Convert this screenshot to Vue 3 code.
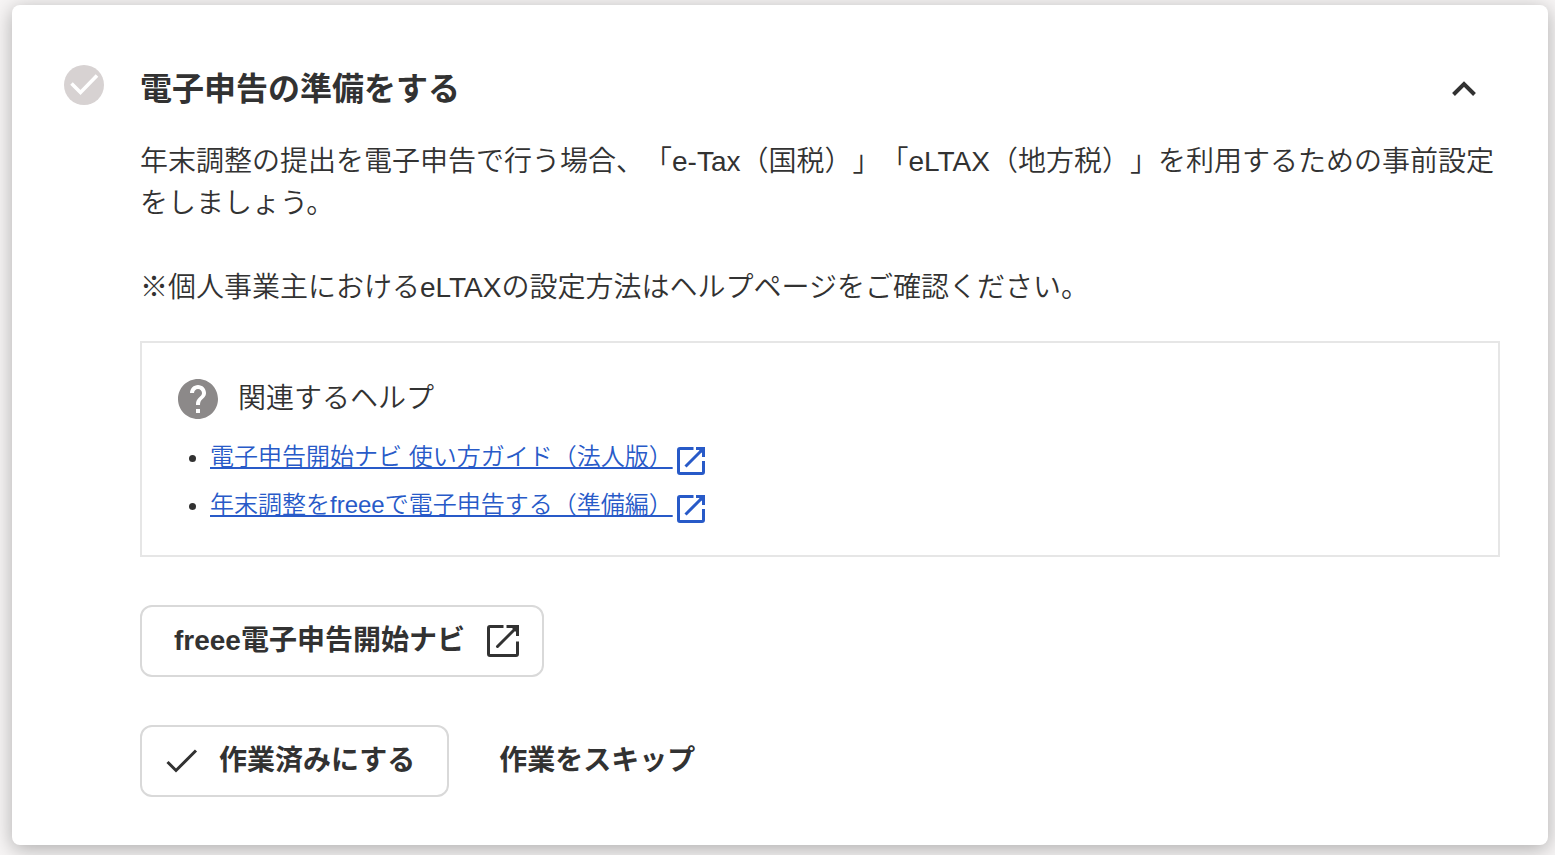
<script setup>
import { ref } from 'vue';

const isOpen = ref(true);

const helpLinks = [
    { id: 1, label: '電子申告開始ナビ 使い方ガイド（法人版）' },
    { id: 2, label: '年末調整をfreeeで電子申告する（準備編）' }
];

const toggle = () => {
    isOpen.value = !isOpen.value;
};
</script>

<template>
    <section class="task-card">
        <svg class="status-icon" viewBox="0 0 40 40" aria-hidden="true">
            <circle cx="20" cy="20" r="20" fill="#d7d2d2" />
            <path d="M7.500 18.500l9 9L33 10.500" fill="none" stroke="#fff" stroke-width="3.600" />
        </svg>

        <div class="task-main">
            <header class="task-header">
                <h2>電子申告の準備をする</h2>
                <button class="toggle" type="button" aria-label="開閉" :aria-expanded="isOpen" @click="toggle">
                    <svg viewBox="0 0 32 32" aria-hidden="true">
                        <path d="M5.500 21.500L16 11l10.500 10.500" />
                    </svg>
                </button>
            </header>

            <div v-show="isOpen" class="task-body">
                <p>年末調整の提出を電子申告で行う場合、「e-Tax（国税）」「eLTAX（地方税）」を利用するための事前設定をしましょう。</p>
                <p>※個人事業主におけるeLTAXの設定方法はヘルプページをご確認ください。</p>

                <div class="help-box">
                    <div class="help-title">
                        <svg viewBox="0 0 24 24" aria-hidden="true">
                            <path fill="#8c8989" d="M12 2C6.480 2 2 6.480 2 12s4.480 10 10 10 10-4.480 10-10S17.520 2 12 2zm1 17h-2v-2h2v2zm2.070-7.750l-.9.920C13.450 12.900 13 13.500 13 15h-2v-.5c0-1.100.450-2.100 1.170-2.830l1.240-1.260c.370-.360.590-.860.590-1.410 0-1.100-.9-2-2-2s-2 .9-2 2H8c0-2.210 1.790-4 4-4s4 1.790 4 4c0 .880-.360 1.680-.930 2.250z" />
                        </svg>
                        <span>関連するヘルプ</span>
                    </div>
                    <ul class="help-list">
                        <li v-for="link in helpLinks" :key="link.id">
                            <a href="#">
                                <span class="link-text">{{ link.label }}</span>
                                <svg class="open-icon" viewBox="0 0 36 36" aria-hidden="true">
                                    <path d="M20.500 5.500H7a1.500 1.500 0 0 0-1.500 1.500v22a1.500 1.500 0 0 0 1.500 1.500h22a1.500 1.500 0 0 0 1.500-1.500V18" />
                                    <path d="M23 5.500h7.500V14M30.500 5.500L12.500 23.500" />
                                    <path d="M24 5h7v7z" fill="currentColor" stroke="none" />
                                </svg>
                            </a>
                        </li>
                    </ul>
                </div>

                <div class="actions">
                    <button class="btn btn-navi" type="button">
                        <span>freee電子申告開始ナビ</span>
                        <svg class="open-icon" viewBox="0 0 36 36" aria-hidden="true">
                            <path d="M18.500 3.500H5a1.500 1.500 0 0 0-1.500 1.500v26a1.500 1.500 0 0 0 1.500 1.500h26a1.500 1.500 0 0 0 1.500-1.500V18.500" />
                            <path d="M21.500 3.500h11V13" />
                            <path d="M32 4L12.500 23.500" stroke-linecap="round" />
                            <path d="M25 3h8v8z" fill="currentColor" stroke="none" />
                        </svg>
                    </button>
                </div>
                <div class="actions">
                    <button class="btn btn-done" type="button">
                        <svg class="check-icon" viewBox="0 0 32 32" aria-hidden="true">
                            <path d="M1.500 17l8.500 8.500L30 5.500" />
                        </svg>
                        <span>作業済みにする</span>
                    </button>
                    <button class="btn btn-text" type="button">作業をスキップ</button>
                </div>
            </div>
        </div>
    </section>
</template>

<style>
body {
    margin: 0;
    background-color: #f7f5f5;
}
</style>

<style scoped>
.task-card {
    display: flex;
    align-items: flex-start;
    gap: 36px;
    margin: 5px 7px 10px 12px;
    padding: 60px 48px 48px 52px;
    border-radius: 8px;
    background-color: #fff;
    box-shadow: 0 4px 20px rgba(0, 0, 0, 0.3);
    color: #323232;
    font-family: "Liberation Sans", "Noto Sans CJK JP", sans-serif;
    font-size: 28px;
    font-weight: 350;
    line-height: 42px;
    text-spacing-trim: space-all;
}

svg {
    display: block;
    flex: none;
}

.status-icon {
    width: 40px;
    height: 40px;
}

.task-main {
    flex: 1;
    min-width: 0;
}

.task-header {
    display: flex;
    align-items: center;
    justify-content: space-between;
    padding-right: 20px;
}

h2 {
    margin: 0;
    font-size: 32px;
    font-weight: 700;
    line-height: 48px;
}

.toggle {
    padding: 0;
    border: none;
    background: none;
    cursor: pointer;
}

.toggle svg {
    width: 32px;
    height: 32px;
    fill: none;
    stroke: #323232;
    stroke-width: 4;
}

.task-body {
    padding-top: 28px;
}

p {
    margin: 0 0 42px;
}

p + p {
    margin-bottom: 32px;
}

.help-box {
    padding: 32px 32px 28px;
    border: 2px solid #e6e6e6;
}

.help-title {
    display: flex;
    align-items: center;
    gap: 16px;
}

.help-title svg {
    width: 48px;
    height: 48px;
}

.help-list {
    display: flex;
    flex-direction: column;
    gap: 8px;
    margin: 16px 0 0;
    padding-left: 36px;
    font-size: 24px;
    line-height: 36px;
}

.help-list a {
    display: inline-flex;
    color: #285ac8;
    text-decoration: none;
    vertical-align: top;
}

.link-text {
    text-decoration: underline;
    text-decoration-thickness: 2px;
    text-underline-offset: 2px;
}

.open-icon {
    width: 36px;
    height: 36px;
    fill: none;
    stroke: currentColor;
    stroke-width: 3;
}

.help-list .open-icon {
    margin-top: 4px;
}

.actions {
    display: flex;
    gap: 16px;
    margin-top: 48px;
}

.btn {
    display: flex;
    align-items: center;
    box-sizing: border-box;
    height: 72px;
    padding: 0 32px;
    border: 2px solid #d9d9d9;
    border-radius: 12px;
    background: #fff;
    color: #323232;
    font: inherit;
    font-weight: 700;
    cursor: pointer;
}

.btn-navi {
    gap: 20px;
    padding-right: 21px;
}

.btn-done {
    gap: 21px;
    padding-left: 24px;
}

.btn-text {
    border-color: transparent;
}

.check-icon {
    width: 32px;
    height: 32px;
    fill: none;
    stroke: currentColor;
    stroke-width: 3;
}
</style>
